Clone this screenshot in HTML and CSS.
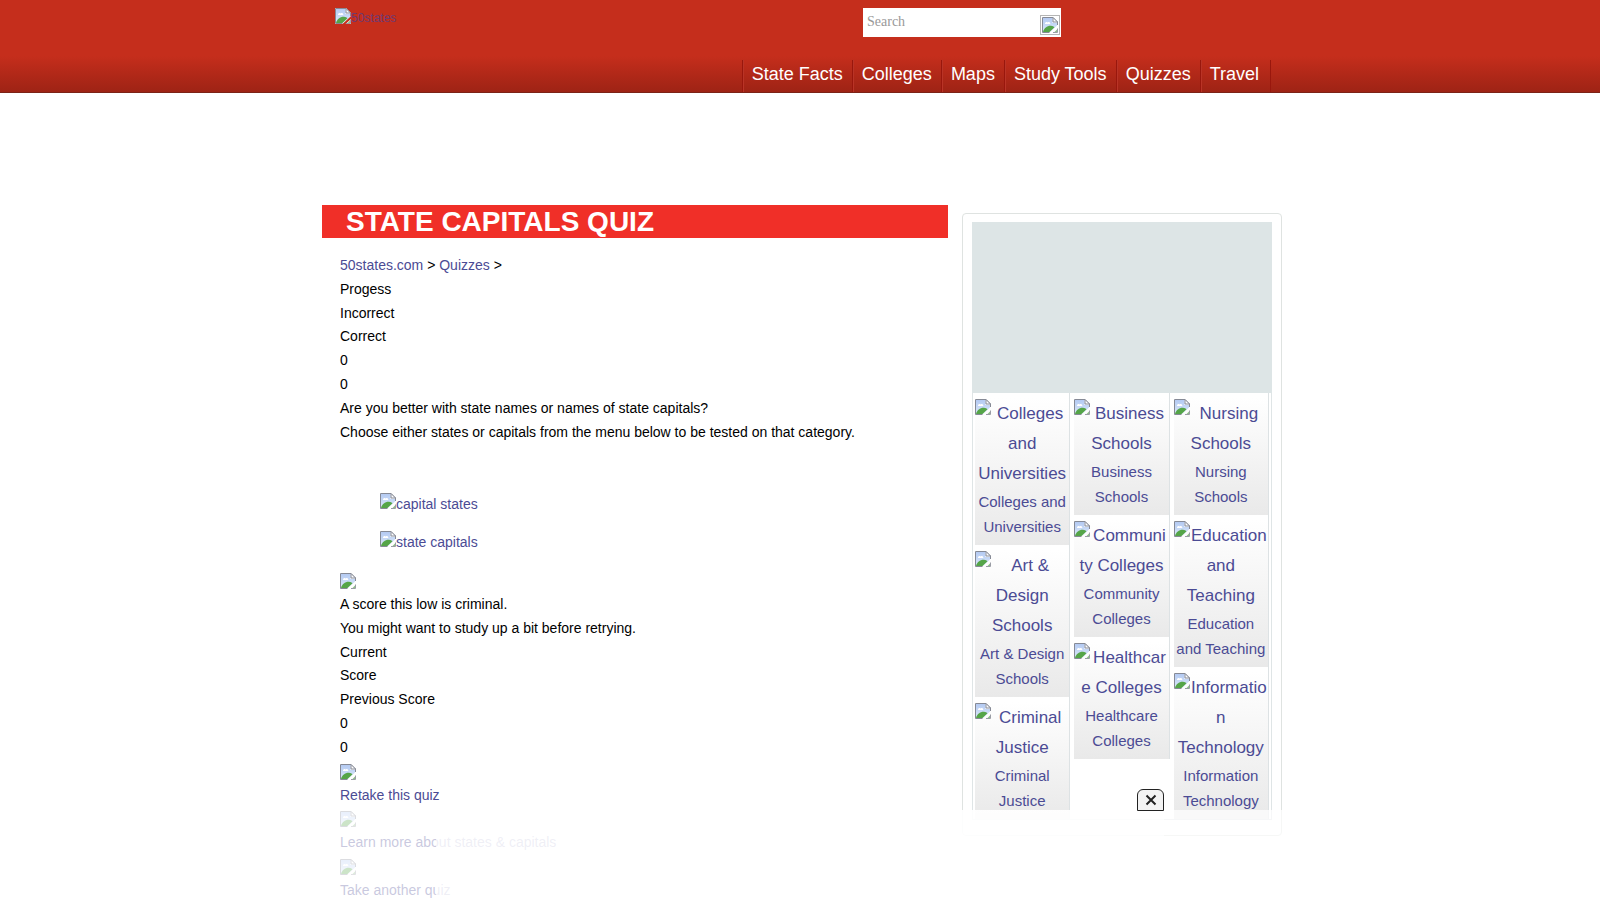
FILE: index.html
```html
<!DOCTYPE html>
<html lang="en">
<head>
<meta charset="utf-8">
<title>State Capitals Quiz</title>
<link rel="stylesheet" href="styles.css">
</head>
<body>
<svg class="defs" aria-hidden="true">
  <defs>
    <linearGradient id="sky" x1="0" y1="0" x2="0" y2="1"><stop offset="0" stop-color="#b4caf2"/><stop offset="1" stop-color="#dbe8fa"/></linearGradient>
    <symbol id="broken" viewBox="0 0 16 16">
      <path d="M0 0h11l5 5v3L7.500 16H0z" fill="#fff"/>
      <path d="M1 1h9.500v5H15v2.500L8 15H1z" fill="url(#sky)"/>
      <path d="M3 6.500c0-1.500 2-2 2.800-1C7 4.500 8.500 5.500 8.300 7H3z" fill="#fff"/>
      <path d="M1 15c1-4 4.500-6.500 8-6.200 1.600.1 2.700.8 3.500 1.500L7.500 15z" fill="#55a548"/>
      <path d="M7.500 15.500H.5V.5H11l4.500 4.500v3" fill="none" stroke="#868a96"/>
      <path d="M11 .5V5h4.500z" fill="#fff" stroke="#868a96"/>
      <path d="M16 11v5h-5.500z" fill="#fff"/>
      <path d="M15 12.500V15h-2.500z" fill="#8fbf88"/>
      <path d="M11 15.500h4.500V11.500" fill="none" stroke="#9a9da5"/>
    </symbol>
  </defs>
</svg>

<header class="header">
  <div class="wrap header-inner">
    <div class="header-top">
      <a class="logo" href="#"><svg class="broken"><use href="#broken"/></svg>50states</a>
      <form class="search">
        <input class="search-text" type="text" placeholder="Search" aria-label="Search">
        <button class="search-go" type="button" aria-label="Go"><svg class="broken"><use href="#broken"/></svg></button>
      </form>
    </div>
    <nav class="nav">
      <a href="#">State Facts</a>
      <a href="#">Colleges</a>
      <a href="#">Maps</a>
      <a href="#">Study Tools</a>
      <a href="#">Quizzes</a>
      <a href="#">Travel</a>
    </nav>
  </div>
</header>

<div class="wrap page">
  <main class="main">
    <h1 class="title">STATE CAPITALS QUIZ</h1>
    <div class="content">
      <div><a href="#">50states.com</a> &gt; <a href="#">Quizzes</a> &gt;</div>
      <div>Progess</div>
      <div>Incorrect</div>
      <div>Correct</div>
      <div>0</div>
      <div>0</div>
      <p>Are you better with state names or names of state capitals?</p>
      <p>Choose either states or capitals from the menu below to be tested on that category.</p>
      <ul class="choices">
        <li><a href="#"><svg class="broken"><use href="#broken"/></svg>capital states</a></li>
        <li><a href="#"><svg class="broken"><use href="#broken"/></svg>state capitals</a></li>
      </ul>
      <div class="pic"><svg class="broken"><use href="#broken"/></svg></div>
      <p>A score this low is criminal.</p>
      <p>You might want to study up a bit before retrying.</p>
      <div>Current</div>
      <div>Score</div>
      <div>Previous Score</div>
      <div>0</div>
      <div>0</div>
      <a class="action" href="#"><span class="pic"><svg class="broken"><use href="#broken"/></svg></span>Retake this quiz</a>
      <a class="action" href="#"><span class="pic"><svg class="broken"><use href="#broken"/></svg></span>Learn more about states &amp; capitals</a>
      <a class="action" href="#"><span class="pic"><svg class="broken"><use href="#broken"/></svg></span>Take another quiz</a>
    </div>
  </main>

  <aside class="panel">
    <div class="panel-ad"></div>
    <div class="columns">
      <div class="column">
        <a class="card" href="#"><span class="alt"><svg class="broken"><use href="#broken"/></svg>Colleges<br>and<br>Universities</span><span class="name">Colleges and Universities</span></a>
        <a class="card" href="#"><span class="alt"><svg class="broken"><use href="#broken"/></svg>Art &amp;<br>Design<br>Schools</span><span class="name">Art &amp; Design Schools</span></a>
        <a class="card" href="#"><span class="alt"><svg class="broken"><use href="#broken"/></svg>Criminal<br>Justice</span><span class="name">Criminal<br>Justice</span></a>
      </div>
      <div class="column">
        <a class="card" href="#"><span class="alt"><svg class="broken"><use href="#broken"/></svg>Business<br>Schools</span><span class="name">Business<br>Schools</span></a>
        <a class="card" href="#"><span class="alt"><svg class="broken"><use href="#broken"/></svg>Communi<br>ty Colleges</span><span class="name">Community Colleges</span></a>
        <a class="card" href="#"><span class="alt"><svg class="broken"><use href="#broken"/></svg>Healthcar<br>e Colleges</span><span class="name">Healthcare Colleges</span></a>
      </div>
      <div class="column">
        <a class="card" href="#"><span class="alt"><svg class="broken"><use href="#broken"/></svg>Nursing<br>Schools</span><span class="name">Nursing<br>Schools</span></a>
        <a class="card" href="#"><span class="alt"><svg class="broken"><use href="#broken"/></svg>Education<br>and<br>Teaching</span><span class="name">Education<br>and Teaching</span></a>
        <a class="card" href="#"><span class="alt"><svg class="broken"><use href="#broken"/></svg>Informatio<br>n<br>Technology</span><span class="name">Information Technology</span></a>
      </div>
    </div>
  </aside>
</div>

<div class="banner">
  <div class="banner-slot">
    <button class="banner-close" type="button" aria-label="Close"><svg viewBox="0 0 12 12"><path d="M1.500 1.500l9 9M10.500 1.500l-9 9" stroke="#222" stroke-width="2"/></svg></button>
  </div>
</div>
</body>
</html>
```

FILE: styles.css
```css
* { box-sizing: border-box; }

body {
  margin: 0;
  min-height: 100vh;
  background: #fff;
  color: #000;
  font-family: "Liberation Sans", Arial, sans-serif;
  font-size: 14px;
  line-height: 1.7;
}

a { color: #4b4b94; text-decoration: none; }
p { margin: 0; }

.defs { position: absolute; width: 0; height: 0; }
.broken { width: 16px; height: 16px; }
.wrap { max-width: 964px; margin: 0 auto; }

/* Header */
.header {
  background: linear-gradient(#c52e1c 0 56px, #9e2315 92px);
  border-bottom: 1px solid #7c2318;
}
.header-inner { padding-top: 8px; }
.header-top {
  display: flex;
  justify-content: space-between;
  align-items: flex-start;
  padding: 0 221px 0 17px;
}
.logo {
  display: flex;
  font-size: 12px;
  line-height: 21px;
  color: #703a72;
}
.search {
  display: flex;
  align-items: flex-end;
  width: 198px;
  height: 29px;
  padding: 0 1px 2px 0;
  background: #fff;
}
.search-text {
  flex: 1;
  min-width: 0;
  align-self: stretch;
  padding: 0 4px;
  border: 0;
  background: none;
  font-family: "Liberation Serif", serif;
  font-size: 14px;
}
.search-text::placeholder { color: #999; }
.search-go {
  display: flex;
  align-items: center;
  justify-content: center;
  width: 20px;
  height: 20px;
  padding: 0;
  border: 1px solid #b5b5b5;
  background: #fff;
}
.nav {
  display: flex;
  justify-content: flex-end;
  padding: 23px 11px 0 0;
}
.nav a {
  padding: 0 9px;
  border-left: 1px solid #99170d;
  box-shadow: inset 1px 0 #b93427;
  color: #fff;
  font-size: 18px;
  line-height: 28px;
  height: 32px;
}
.nav a:last-child { padding-right: 11px; border-right: 1px solid #99170d; }

/* Page body */
.page {
  display: flex;
  gap: 14px;
  align-items: flex-start;
  padding: 112px 0 0 4px;
}
.main { flex: 1; }
.title {
  margin: 0;
  padding-left: 24px;
  background: #f02f28;
  color: #fff;
  font-size: 28px;
  line-height: 33px;
}
.content { padding: 16px 18px 0; }
.choices {
  margin: 49px 0 14px;
  padding: 0 0 0 40px;
  list-style: none;
  display: grid;
  gap: 14px;
}
.pic {
  display: flex;
  align-items: center;
  height: 24px;
}
.action { display: block; }

/* Sidebar */
.panel {
  width: 320px;
  margin-top: 8px;
  padding: 8px 9px 15px;
  border: 1px solid #dfe3e1;
  border-radius: 4px;
}
.panel-ad { height: 171px; background: #dde5e6; }
.columns {
  display: grid;
  grid-template-columns: repeat(3, 1fr);
  gap: 4px;
  align-items: start;
  padding: 0 2px;
  border: solid #dfe5e6;
  border-width: 0 1px 1px;
}
.card {
  display: block;
  padding: 6px 0;
  border-right: 1px solid #dde2e4;
  background: linear-gradient(#fff 5px, #e9e9e9);
  text-align: center;
}
.alt { display: block; font-size: 17px; line-height: 30px; }
.alt .broken { float: left; }
.name { display: block; font-size: 15px; line-height: 25px; }

/* Bottom banner */
.banner {
  position: fixed;
  left: 0;
  right: 0;
  bottom: 0;
  height: 90px;
  background: rgba(255, 255, 255, .7);
}
.banner-slot {
  position: relative;
  max-width: 728px;
  height: 90px;
  margin: 0 auto;
  background: rgba(255, 255, 255, .7);
}
.banner-close {
  position: absolute;
  top: -21px;
  right: 0;
  width: 27px;
  height: 22px;
  display: flex;
  align-items: center;
  justify-content: center;
  padding: 0;
  border: 1px solid #222;
  border-radius: 6px 6px 0 0;
  background: #f3f3f3;
}
.banner-close svg { width: 12px; height: 12px; }
```
